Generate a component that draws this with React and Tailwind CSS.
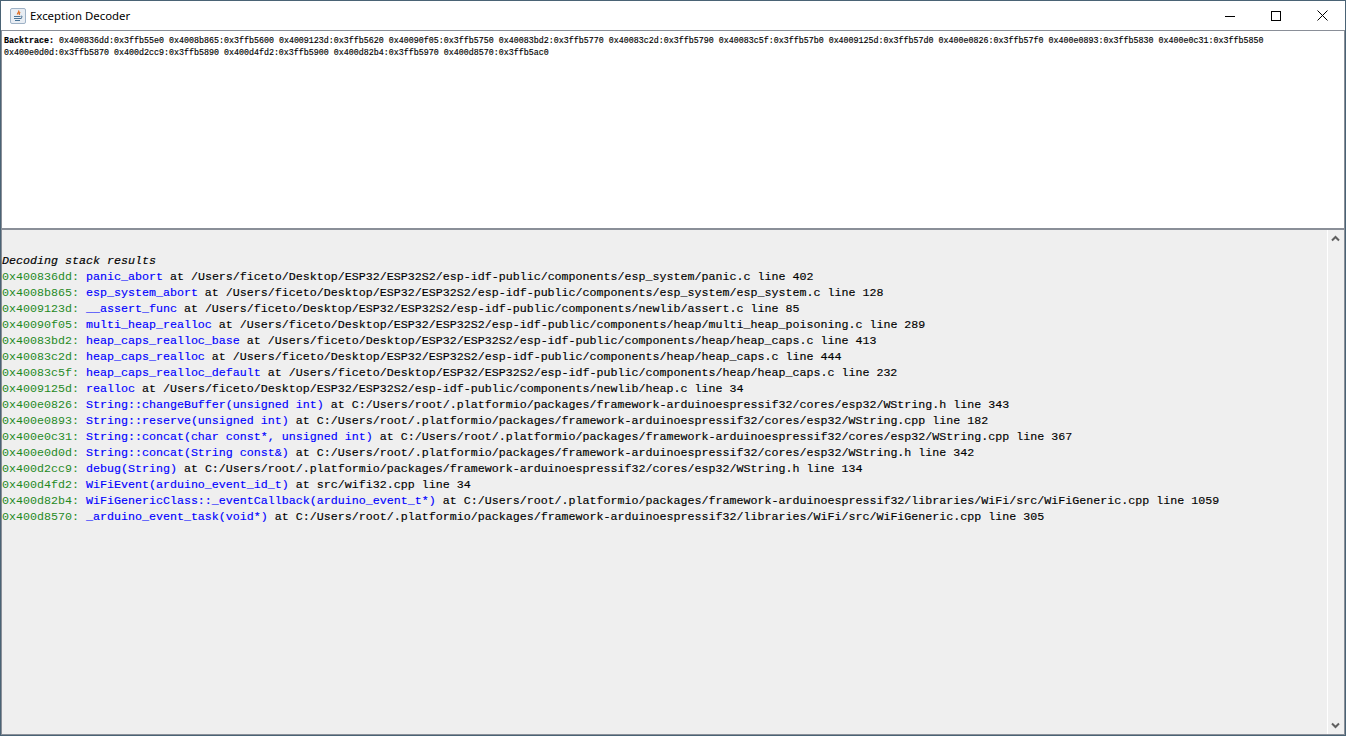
const backtrace = [
  "0x400836dd:0x3ffb55e0 0x4008b865:0x3ffb5600 0x4009123d:0x3ffb5620 0x40090f05:0x3ffb5750 0x40083bd2:0x3ffb5770 0x40083c2d:0x3ffb5790 0x40083c5f:0x3ffb57b0 0x4009125d:0x3ffb57d0 0x400e0826:0x3ffb57f0 0x400e0893:0x3ffb5830 0x400e0c31:0x3ffb5850",
  "0x400e0d0d:0x3ffb5870 0x400d2cc9:0x3ffb5890 0x400d4fd2:0x3ffb5900 0x400d82b4:0x3ffb5970 0x400d8570:0x3ffb5ac0",
];

const rows = [
  ["0x400836dd", "panic_abort", "/Users/ficeto/Desktop/ESP32/ESP32S2/esp-idf-public/components/esp_system/panic.c line 402"],
  ["0x4008b865", "esp_system_abort", "/Users/ficeto/Desktop/ESP32/ESP32S2/esp-idf-public/components/esp_system/esp_system.c line 128"],
  ["0x4009123d", "__assert_func", "/Users/ficeto/Desktop/ESP32/ESP32S2/esp-idf-public/components/newlib/assert.c line 85"],
  ["0x40090f05", "multi_heap_realloc", "/Users/ficeto/Desktop/ESP32/ESP32S2/esp-idf-public/components/heap/multi_heap_poisoning.c line 289"],
  ["0x40083bd2", "heap_caps_realloc_base", "/Users/ficeto/Desktop/ESP32/ESP32S2/esp-idf-public/components/heap/heap_caps.c line 413"],
  ["0x40083c2d", "heap_caps_realloc", "/Users/ficeto/Desktop/ESP32/ESP32S2/esp-idf-public/components/heap/heap_caps.c line 444"],
  ["0x40083c5f", "heap_caps_realloc_default", "/Users/ficeto/Desktop/ESP32/ESP32S2/esp-idf-public/components/heap/heap_caps.c line 232"],
  ["0x4009125d", "realloc", "/Users/ficeto/Desktop/ESP32/ESP32S2/esp-idf-public/components/newlib/heap.c line 34"],
  ["0x400e0826", "String::changeBuffer(unsigned int)", "C:/Users/root/.platformio/packages/framework-arduinoespressif32/cores/esp32/WString.h line 343"],
  ["0x400e0893", "String::reserve(unsigned int)", "C:/Users/root/.platformio/packages/framework-arduinoespressif32/cores/esp32/WString.cpp line 182"],
  ["0x400e0c31", "String::concat(char const*, unsigned int)", "C:/Users/root/.platformio/packages/framework-arduinoespressif32/cores/esp32/WString.cpp line 367"],
  ["0x400e0d0d", "String::concat(String const&)", "C:/Users/root/.platformio/packages/framework-arduinoespressif32/cores/esp32/WString.h line 342"],
  ["0x400d2cc9", "debug(String)", "C:/Users/root/.platformio/packages/framework-arduinoespressif32/cores/esp32/WString.h line 134"],
  ["0x400d4fd2", "WiFiEvent(arduino_event_id_t)", "src/wifi32.cpp line 34"],
  ["0x400d82b4", "WiFiGenericClass::_eventCallback(arduino_event_t*)", "C:/Users/root/.platformio/packages/framework-arduinoespressif32/libraries/WiFi/src/WiFiGeneric.cpp line 1059"],
  ["0x400d8570", "_arduino_event_task(void*)", "C:/Users/root/.platformio/packages/framework-arduinoespressif32/libraries/WiFi/src/WiFiGeneric.cpp line 305"],
];

function JavaIcon() {
  return (
    <svg width="16" height="16" viewBox="0 0 16 16" fill="none">
      <rect x="0.5" y="0.5" width="15" height="15" rx="1.5" fill="#e8edf3" stroke="#9fb2c6" />
      <path d="M8.5 2.5C10 4 7 5 7.5 6.5M10 4C9 5.5 9 6 9.5 7" stroke="#e0722a" strokeWidth="1.3" />
      <path d="M4 8.5H10.5M4 10.5H11.5M5 12.5H10" stroke="#4a7396" strokeWidth="1.1" />
      <path d="M11 8C12.5 8 12.5 9.5 11 10" stroke="#4a7396" />
    </svg>
  );
}

export default function App() {
  return (
    <div className="h-[736px] w-[1346px] overflow-hidden flex flex-col bg-white border border-[#4a6375] font-['Liberation_Mono',monospace] text-black">
      <div className="h-[30px] shrink-0 flex items-center bg-white border-b border-b-[#8a8f98]">
        <div className="ml-[9px] w-4 h-4"><JavaIcon /></div>
        <span className="ml-[4px] font-['Noto_Sans',sans-serif] text-[11.4px] text-black">Exception Decoder</span>
        <div className="ml-auto flex h-full">
          <div className="w-[46px] flex items-center justify-center">
            <svg width="10" height="10" viewBox="0 0 10 10"><path d="M0 5.5H10" stroke="#000" /></svg>
          </div>
          <div className="w-[46px] flex items-center justify-center">
            <svg width="10" height="10" viewBox="0 0 10 10"><rect x="0.5" y="0.5" width="9" height="9" fill="none" stroke="#000" /></svg>
          </div>
          <div className="w-[46px] flex items-center justify-center">
            <svg width="11" height="11" viewBox="0 0 11 11"><path d="M0.5 0.5L10.5 10.5M10.5 0.5L0.5 10.5" stroke="#000" /></svg>
          </div>
        </div>
      </div>

      <div className="flex-1 min-h-0 flex flex-col border-x border-b border-[#8a8f98]">
        <div className="h-[197px] shrink-0 bg-white pl-[2px] pt-[4px] text-[8.33px] leading-[12px] whitespace-pre [-webkit-text-stroke:0.15px]">
          <div><span className="font-bold">Backtrace: </span>{backtrace[0]}</div>
          <div>{backtrace[1]}</div>
        </div>

        <div className="h-[2px] shrink-0 bg-[#8a8f98]" />

        <div className="flex-1 min-h-0 flex bg-[#efefef]">
          <div className="flex-1 min-w-0 pt-[23px] text-[11.67px] leading-[16px] whitespace-pre border-r border-white [-webkit-text-stroke:0.15px]">
            <div className="italic">Decoding stack results</div>
            {rows.map(([addr, fn, loc]) => (
              <div key={addr}>
                <span className="text-[#1f8a1f] [-webkit-text-stroke:0px]">{addr}: </span>
                <span className="text-[#0000ff]">{fn}</span>
                <span> at {loc}</span>
              </div>
            ))}
          </div>
          <div className="w-[16px] shrink-0 flex flex-col justify-between items-center py-[5px] pr-px bg-[#f0f0f0]">
            <svg width="9" height="7" viewBox="0 0 9 7"><path d="M1 5.5L4.5 2L8 5.5" fill="none" stroke="#606060" strokeWidth="2" /></svg>
            <svg width="9" height="7" viewBox="0 0 9 7"><path d="M1 1.5L4.5 5L8 1.5" fill="none" stroke="#606060" strokeWidth="2" /></svg>
          </div>
        </div>
      </div>
    </div>
  );
}
